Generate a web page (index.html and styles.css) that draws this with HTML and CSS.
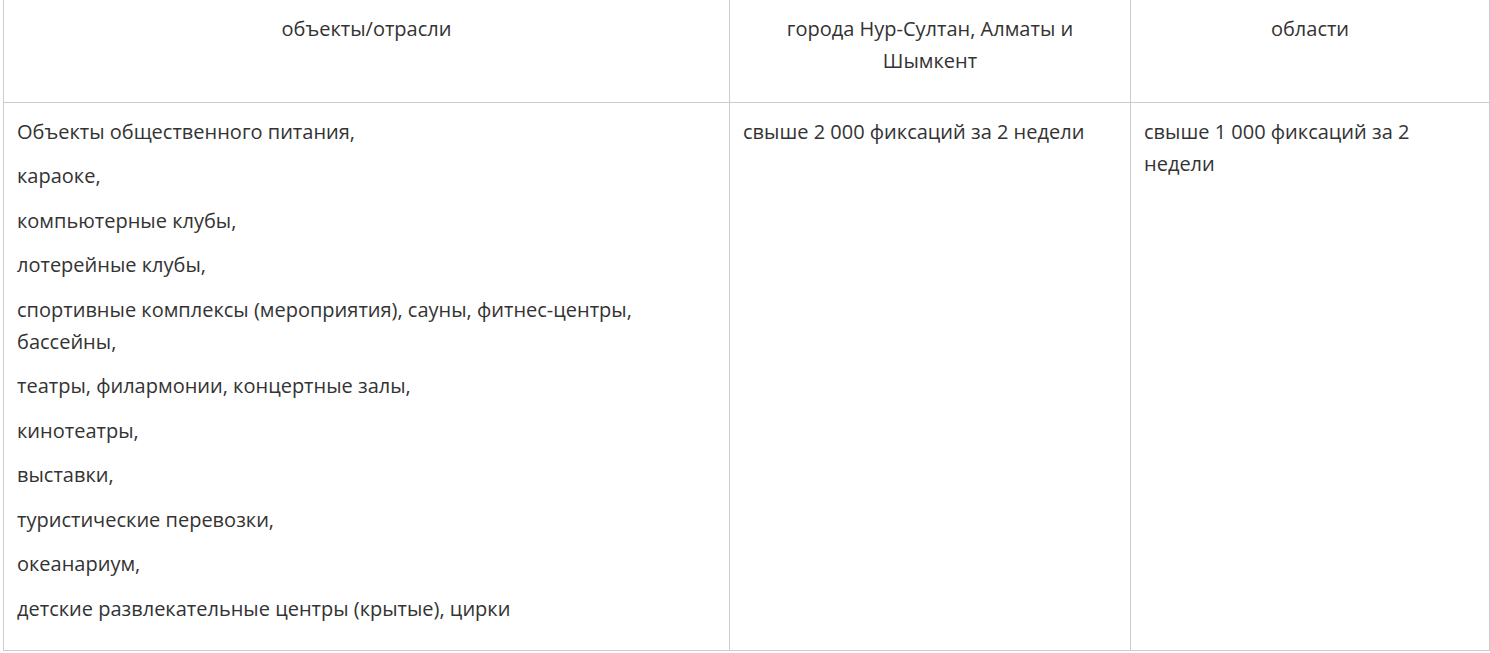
FILE: index.html
```html
<!DOCTYPE html>
<html lang="ru">
<head>
  <meta charset="UTF-8">
  <title>Фиксации</title>
  <link rel="stylesheet" href="styles.css">
</head>
<body>
<table class="limits">
  <colgroup>
    <col class="col-objects">
    <col class="col-cities">
    <col class="col-regions">
  </colgroup>
  <thead>
    <tr>
      <th><p>объекты/отрасли</p></th>
      <th><p>города Нур-Султан, Алматы и Шымкент</p></th>
      <th><p>области</p></th>
    </tr>
  </thead>
  <tbody>
    <tr>
      <td>
        <p>Объекты общественного питания,</p>
        <p>караоке,</p>
        <p>компьютерные клубы,</p>
        <p>лотерейные клубы,</p>
        <p>спортивные комплексы (мероприятия), сауны, фитнес-центры, бассейны,</p>
        <p>театры, филармонии, концертные залы,</p>
        <p>кинотеатры,</p>
        <p>выставки,</p>
        <p>туристические перевозки,</p>
        <p>океанариум,</p>
        <p>детские развлекательные центры (крытые), цирки</p>
      </td>
      <td><p>свыше 2 000 фиксаций за 2 недели</p></td>
      <td><p>свыше 1 000 фиксаций за 2 недели</p></td>
    </tr>
  </tbody>
</table>
</body>
</html>
```

FILE: styles.css
```css
body {
  margin: 0;
  padding: 0 0 0 3px;
  background: #fff;
  font-family: "Open Sans", "Liberation Sans", sans-serif;
  font-size: 20px;
  line-height: 32px;
  color: #333;
}

.limits {
  border-collapse: collapse;
  table-layout: fixed;
  width: 1486px;
  margin-top: -1px;
}

.limits th, .limits td {
  border: 1px solid #ccc;
  padding: 13px 13px;
  vertical-align: top;
  text-align: left;
}

.limits th {
  font-weight: normal;
  text-align: center;
  padding-bottom: 12px;
}

.limits p {
  margin: 0 0 12.5px;
}

.col-objects {
  width: 726px;
}

.col-cities {
  width: 401px;
}

.col-regions {
  width: 359px;
}
```
